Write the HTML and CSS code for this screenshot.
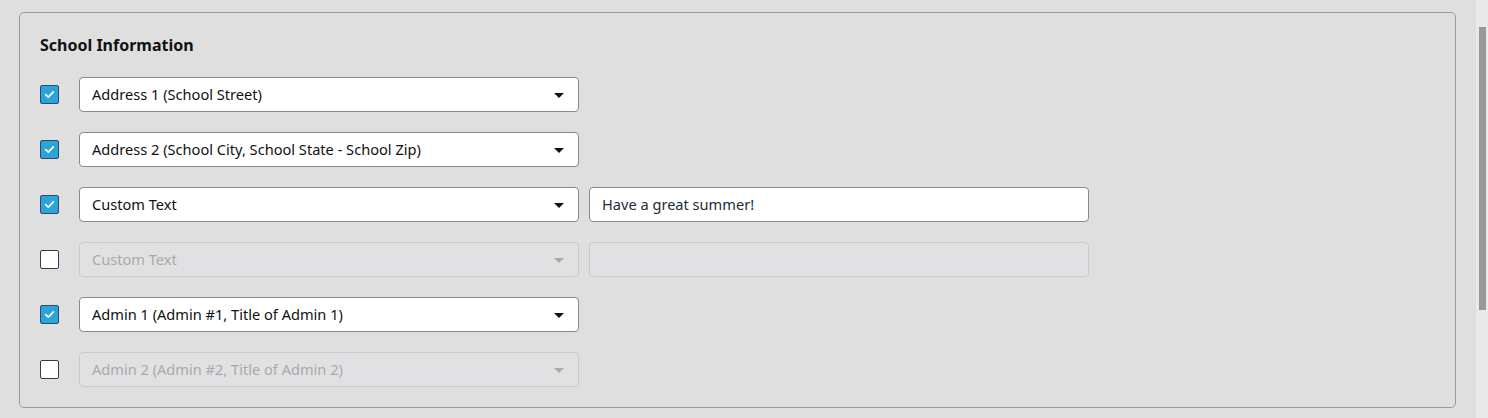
FILE: index.html
```html
<!DOCTYPE html>
<html>
<head>
<meta charset="utf-8">
<link rel="stylesheet" href="styles.css">
</head>
<body>
<div class="page">
  <main class="main">
    <section class="card">
      <h2 class="title">School Information</h2>
      <div class="rows">
        <div class="row">
          <span class="cb checked"><svg viewBox="0 0 20 20" width="20" height="20"><path d="M5.5 10.2 L8.6 13 L14.5 7" fill="none" stroke="#fff" stroke-width="2" stroke-linecap="round" stroke-linejoin="round"/></svg></span>
          <div class="select"><span class="sel-text">Address 1 (School Street)</span><span class="caret"></span></div>
        </div>
        <div class="row">
          <span class="cb checked"><svg viewBox="0 0 20 20" width="20" height="20"><path d="M5.5 10.2 L8.6 13 L14.5 7" fill="none" stroke="#fff" stroke-width="2" stroke-linecap="round" stroke-linejoin="round"/></svg></span>
          <div class="select"><span class="sel-text">Address 2 (School City, School State - School Zip)</span><span class="caret"></span></div>
        </div>
        <div class="row">
          <span class="cb checked"><svg viewBox="0 0 20 20" width="20" height="20"><path d="M5.5 10.2 L8.6 13 L14.5 7" fill="none" stroke="#fff" stroke-width="2" stroke-linecap="round" stroke-linejoin="round"/></svg></span>
          <div class="select"><span class="sel-text">Custom Text</span><span class="caret"></span></div>
          <div class="input"><span class="input-text">Have a great summer!</span></div>
        </div>
        <div class="row">
          <span class="cb"></span>
          <div class="select disabled"><span class="sel-text">Custom Text</span><span class="caret"></span></div>
          <div class="input disabled"></div>
        </div>
        <div class="row">
          <span class="cb checked"><svg viewBox="0 0 20 20" width="20" height="20"><path d="M5.5 10.2 L8.6 13 L14.5 7" fill="none" stroke="#fff" stroke-width="2" stroke-linecap="round" stroke-linejoin="round"/></svg></span>
          <div class="select"><span class="sel-text">Admin 1 (Admin #1, Title of Admin 1)</span><span class="caret"></span></div>
        </div>
        <div class="row">
          <span class="cb"></span>
          <div class="select disabled"><span class="sel-text">Admin 2 (Admin #2, Title of Admin 2)</span><span class="caret"></span></div>
        </div>
      </div>
    </section>
  </main>
  <div class="scrollbar"><div class="thumb"></div></div>
</div>
</body>
</html>
```
FILE: styles.css
```css
* { box-sizing: border-box; }
html, body { margin: 0; padding: 0; }
body {
  background: #dfdfdf;
  font-family: "Noto Sans", "Liberation Sans", sans-serif;
  color: #111;
  width: 1488px;
  height: 418px;
  overflow: hidden;
}
.page { display: flex; height: 418px; }
.main { flex: 1; padding: 12px 20px 0 19px; }
.card {
  border: 1px solid #9a9a9a;
  border-radius: 5px;
  height: 396px;
  padding: 22px 20px 0 20px;
}
.title {
  margin: 0;
  font-size: 16px;
  line-height: 20px;
  font-weight: 700;
  color: #111;
}
.rows { display: flex; flex-direction: column; gap: 20px; margin-top: 22px; }
.row { display: flex; align-items: center; height: 35px; }
.cb {
  width: 19px; height: 19px;
  border: 1px solid #2c3e50;
  border-radius: 2px;
  background: #fff;
  margin-right: 20px;
  display: flex; align-items: center; justify-content: center;
  flex: none;
}
.cb.checked { background: #2aa5db; border-color: #34495e; }
.cb svg { width: 17px; height: 17px; }
.select {
  width: 500px; height: 35px;
  background: #fff;
  border: 1px solid #8a8a8a;
  border-radius: 4px;
  display: flex; align-items: center; justify-content: space-between;
  padding: 0 14px 2px 12px;
  font-size: 14.6px;
  color: #111;
}
.caret {
  width: 0; height: 0;
  border-left: 5px solid transparent;
  border-right: 5px solid transparent;
  border-top: 5px solid #111;
  margin-top: 4px;
}
.select.disabled { background: #e1e1e3; border-color: #c9c9c9; color: #a9a9a9; }
.select.disabled .caret { border-top-color: #a9a9a9; }
.input {
  width: 500px; height: 35px;
  margin-left: 10px;
  background: #fff;
  border: 1px solid #8a8a8a;
  border-radius: 4px;
  display: flex; align-items: center;
  padding: 0 12px 2px;
  font-size: 14.6px;
  color: #1e2b38;
}
.input.disabled { background: #e1e1e3; border-color: #c9c9c9; }
.scrollbar { width: 12px; background: #e9e9e9; padding: 27px 2px 0 3px; }
.thumb { width: 7px; height: 283px; background: #989898; }
```
